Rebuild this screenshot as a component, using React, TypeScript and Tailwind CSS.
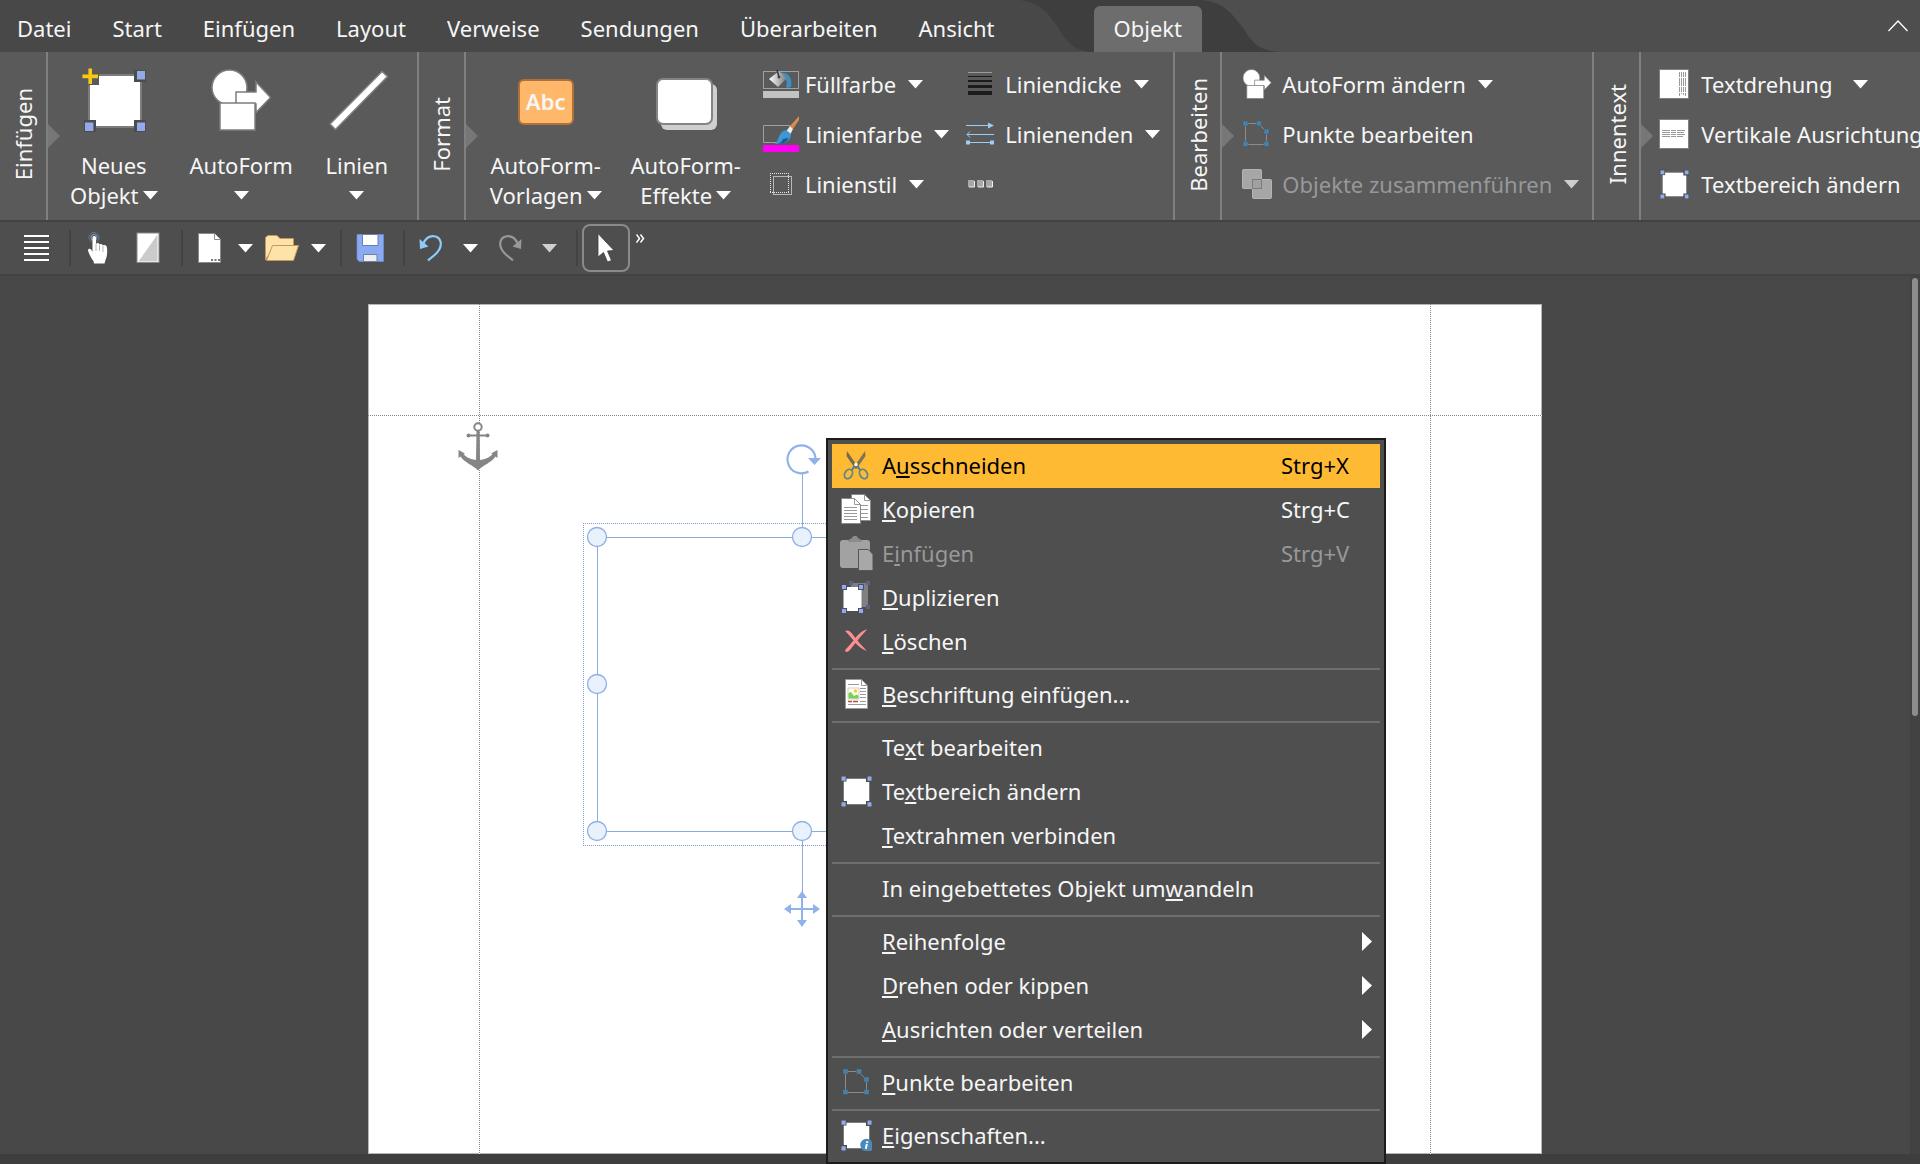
import type { ReactNode } from 'react';

function Caret({ dim = false }: { dim?: boolean }) {
  return (
    <svg width="15" height="9" viewBox="0 0 15 9" className="shrink-0" aria-hidden="true">
      <path d="M0 0H15L7.5 8.500Z" fill={dim ? '#cfcfcf' : '#ffffff'} />
    </svg>
  );
}

function ObjectIcon({ size, plus = false, info = false }: { size: number; plus?: boolean; info?: boolean }) {
  return (
    <svg width={size} height={size} viewBox="0 0 32 32" aria-hidden="true">
      <rect x="3.500" y="3.500" width="26" height="26" fill="#fff" stroke="#7c7c7c" />
      {!plus && <rect x="0.500" y="0.500" width="6" height="6" fill="#4c4c4c" />}
      {!plus && <rect x="1.500" y="1.500" width="4.200" height="4.200" fill="#93aaea" />}
      <path d="M26 1H32V7H26ZM26 26H32V32H26ZM1 26H7V32H1Z" fill="#4c4c4c" />
      <path d="M27.500 1.500H31.500V5.700H27.500ZM27.500 27.300H31.500V31.500H27.500ZM1.500 27.300H5.700V31.500H1.500Z" fill="#93aaea" />
      {plus && <path d="M2 2H8.500V8.500H2Z" fill="#5a5a5a" />}
      {plus && <path d="M3.200 0.300H5V3.300H8V5.100H5V8H3.200V5.100H0.200V3.300H3.200Z" fill="#f9c914" />}
      {info && (
        <g>
          <circle cx="26.500" cy="26" r="6.200" fill="#4a8abb" />
          <path d="M27.400 22.200L27 24M26.900 25L25.800 29.800" stroke="#fff" strokeWidth="2" />
        </g>
      )}
    </svg>
  );
}

function ShapesIcon({ width, height }: { width: number; height: number }) {
  return (
    <svg width={width} height={height} viewBox="0 0 60 62" aria-hidden="true">
      <g fill="#fff" stroke="#7e7e7e" strokeWidth="1.500">
        <circle cx="18.500" cy="18.500" r="17.500" />
        <path d="M25 23H45V13L59.500 28.500L45 43.500V35H25Z" />
        <rect x="9" y="34" width="35" height="27" />
      </g>
    </svg>
  );
}

function LineIcon() {
  return (
    <svg width="64" height="62" viewBox="-4 0 64 62" aria-hidden="true">
      <path d="M1 55L53 2.500L58.500 7.500L6.500 60.500Z" fill="#fff" stroke="#7e7e7e" strokeWidth="1.500" />
    </svg>
  );
}

function EffectsIcon() {
  return (
    <svg width="65" height="64" viewBox="-3 -10 65 64" aria-hidden="true">
      <rect x="5" y="6" width="56" height="46" rx="6" fill="#cfcfcf" />
      <rect x="1" y="1" width="55" height="45" rx="6" fill="#fff" stroke="#848484" strokeWidth="2" />
    </svg>
  );
}

function FillIcon() {
  return (
    <svg width="36" height="30" viewBox="0 0 36 30" aria-hidden="true">
      <defs>
        <linearGradient id="bucket" x1="0" y1="0" x2="1" y2="0">
          <stop offset="0" stopColor="#fff" />
          <stop offset="1" stopColor="#777" />
        </linearGradient>
      </defs>
      <rect x="0.500" y="2.500" width="35" height="17" fill="none" stroke="#a0a0a0" />
      <rect y="22" width="36" height="7" fill="#c2c2c2" />
      <path d="M17 4C25 2 30 9 28 18C26 19 24 19 23 18C25 12 23 8 17 7Z" fill="#3d8fc2" />
      <path d="M16 2L24 9L15 18L6 10Z" fill="url(#bucket)" />
      <path d="M14 1L16 8" stroke="#333" strokeWidth="1.500" />
      <circle cx="16" cy="8" r="1.500" fill="#444" />
    </svg>
  );
}

function BrushIcon() {
  return (
    <svg width="36" height="36" viewBox="0 0 36 36" aria-hidden="true">
      <path d="M27 9.500H0.500V26.500H14" fill="none" stroke="#a0a0a0" />
      <rect y="29" width="36" height="7" fill="#ff00f6" />
      <path d="M36 0V4L30 13L27 10Z" fill="#d98a4e" />
      <path d="M27 10L30 13L27.500 18L23.500 15Z" fill="#eee" />
      <path d="M23 14L28 18C28 25 22 28 12 28C16 25 15 16 23 14Z" fill="#3f97d2" />
      <path d="M20 23C19 26 16 28 12 28L19 27.500C23 26.500 25 24 25.500 22Z" fill="#15599a" />
    </svg>
  );
}

function LineStyleIcon() {
  return (
    <svg width="24" height="24" viewBox="0 0 24 24" shapeRendering="crispEdges" aria-hidden="true">
      <path d="M1 1.500H20M1 20.500H20M1.500 1V21M19.500 1V21" stroke="#e4e4e4" strokeDasharray="1 1" />
      <rect x="4.500" y="4.500" width="18" height="18" fill="none" stroke="#b8b8b8" />
    </svg>
  );
}

function LineWidthIcon() {
  return (
    <svg width="24" height="24" viewBox="0 0 24 24" aria-hidden="true">
      <path d="M0 0H24V1H0Z" fill="#9a9a9a" />
      <path d="M0 4H24V5H0ZM0 8H24V10H0ZM0 13H24V16H0ZM0 19H24V23H0Z" fill="#1c1c1c" />
    </svg>
  );
}

function LineEndsIcon() {
  return (
    <svg width="28" height="24" viewBox="0 0 28 24" aria-hidden="true">
      <g stroke="#9ccdf5" fill="none">
        <path d="M0 3.500H24M1 12.500H28" />
        <path d="M4 9.500L1 12.500L4 15.500" />
        <path d="M2 20.500H26" />
      </g>
      <path d="M22 0.500L28 3.500L22 6.500ZM0 18.500H4V22.500H0ZM24 18.500H28V22.500H24Z" fill="#9ccdf5" />
    </svg>
  );
}

function MoreIcon() {
  return (
    <svg width="26" height="8" viewBox="0 0 26 8" aria-hidden="true">
      <path d="M0 0H6V7H0ZM9 0H15V7H9ZM18 0H24V7H18Z" fill="#a8a8a8" />
      <path d="M1 7H6.500V1M10 7H15.500V1M19 7H24.500V1" stroke="#efefef" fill="none" />
    </svg>
  );
}

function PointsIcon() {
  return (
    <svg width="28" height="28" viewBox="0 0 28 28" aria-hidden="true">
      <path d="M3.500 3.500H16L24.500 11.500V24.500H3.500Z" fill="none" stroke="#8c8c8c" />
      <path d="M1 1H6V6H1ZM14.500 1H19.500V6H14.500ZM22 9H27V14H22ZM1 21.500H6V26.500H1ZM22 21.500H27V26.500H22Z" fill="#4a80a6" stroke="#41586a" strokeWidth="0.500" />
    </svg>
  );
}

function MergeIcon() {
  return (
    <svg width="30" height="30" viewBox="0 0 30 30" aria-hidden="true">
      <rect x="0.500" y="0.500" width="19" height="19" rx="1" fill="#a6a6a6" stroke="#b4b4b4" />
      <rect x="10.500" y="10.500" width="19" height="19" rx="1" fill="#a6a6a6" stroke="#b4b4b4" />
      <rect x="10.500" y="10.500" width="9" height="9" fill="#a0a0a0" stroke="#7c7c7c" />
    </svg>
  );
}

function TextRotateIcon() {
  return (
    <svg width="30" height="30" viewBox="0 0 30 30" aria-hidden="true">
      <rect x="0.500" y="0.500" width="29" height="29" fill="#fff" stroke="#808080" />
      <path d="M20.500 3V27M22.500 3V25M24.500 3V26M26.500 3V27" stroke="#9a9a9a" strokeDasharray="5 1 8 1" />
    </svg>
  );
}

function TextAlignIcon() {
  return (
    <svg width="30" height="30" viewBox="0 0 30 30" aria-hidden="true">
      <rect x="0.500" y="0.500" width="29" height="29" fill="#fff" stroke="#808080" />
      <path d="M3 11.500H27M3 13.500H25M3 15.500H26M3 17.500H24" stroke="#9a9a9a" strokeDasharray="8 1 5 1" />
    </svg>
  );
}

function HandIcon() {
  return (
    <svg width="32" height="32" viewBox="0 0 32 32" aria-hidden="true">
      <circle cx="12" cy="5.500" r="5" fill="none" stroke="#66779e" strokeWidth="1" />
      <circle cx="12" cy="5.500" r="3" fill="none" stroke="#8fa5d5" strokeWidth="1" />
      <path d="M10.500 5.500C10.500 3.500 14 3.500 14 5.500V12C15 10.500 17 11 17.500 12.500C18.500 11.500 20.500 12 21 13.500C22.500 12.500 25 13.500 25 16C25.500 21 25 25 23.500 28L22.500 31.500H12L11.500 29C9 26 7 22 6 18.500C6 16.500 8 16 9.500 18L10.500 20Z" fill="#fff" />
      <path d="M14 12V19M17.500 13V19M21 14V20" stroke="#9a9a9a" strokeWidth="0.700" />
    </svg>
  );
}

function ContrastPageIcon() {
  return (
    <svg width="32" height="32" viewBox="0 0 32 32" aria-hidden="true">
      <rect x="5" y="1" width="22" height="30" fill="#fff" />
      <path d="M25.500 2.500V29.500H6.500Z" fill="#cbcbcb" />
      <rect x="5" y="1" width="22" height="29.500" fill="none" stroke="#8a8a8a" />
    </svg>
  );
}

function NewIcon() {
  return (
    <svg width="32" height="32" viewBox="0 0 32 32" aria-hidden="true">
      <path d="M4.500 1.500H20.500L26.500 7.500V30.500H4.500Z" fill="#fff" stroke="#8a8a8a" />
      <path d="M20.500 1.500V7.500H26.500" fill="#fff" stroke="#8a8a8a" />
      <path d="M17 27H19V29H17ZM20.500 27H22.500V29H20.500ZM24 27H26V29H24Z" fill="#777" />
    </svg>
  );
}

function FolderIcon() {
  return (
    <svg width="34" height="32" viewBox="0 0 34 32" aria-hidden="true">
      <g fill="#fde2a9" stroke="#c8955d" strokeLinejoin="round">
        <path d="M0.500 28V5.500L3 3.500H12L15 6.500H28.500V16H8Z" />
        <path d="M1.500 28.500L7.500 13.500H33.500L28.500 28.500Z" />
      </g>
    </svg>
  );
}

function SaveIcon() {
  return (
    <svg width="32" height="32" viewBox="0 0 32 32" aria-hidden="true">
      <path d="M3 2.500H29.500V29.500H5L3 27Z" fill="#8aabf3" stroke="#6f8fd6" strokeWidth="0.700" />
      <path d="M8.500 2.500H24V13.500H8.500Z" fill="#fff" stroke="#6b80a8" />
      <path d="M9.500 22.500H23V29.500H9.500Z" fill="#eee" stroke="#6b80a8" />
    </svg>
  );
}

function UndoIcon({ color, flip = false }: { color: string; flip?: boolean }) {
  return (
    <svg width="32" height="32" viewBox="0 0 32 32" aria-hidden="true">
      <g transform={flip ? 'matrix(-1 0 0 1 32 0)' : undefined}>
        <path d="M8 12C11 5.500 16 3.500 20.500 4.500C26 6 27 12 24.500 17C22 22 17 25 13 28.500" fill="none" stroke={color} strokeWidth="2.200" />
        <path d="M4.500 7L5 17L13.500 14.500Z" fill={color} />
      </g>
    </svg>
  );
}

function PointerIcon() {
  return (
    <svg width="32" height="32" viewBox="0 0 32 32" aria-hidden="true">
      <path d="M8 1.500L24 18.500L17.500 19L21.500 28.500L17.500 30L13.500 20.500L8 25Z" fill="#fff" stroke="#3d3d3d" strokeWidth="0.800" />
    </svg>
  );
}

function ScissorsIcon() {
  return (
    <svg width="32" height="32" viewBox="0 0 32 32" aria-hidden="true">
      <path d="M7 2L18 18L15.500 20L6.500 7Z" fill="#756c4f" />
      <path d="M25 2L14 18L16.500 20L25.500 7Z" fill="#7d7355" />
      <path d="M15 16L12 21M17 16L20 21" stroke="#5a7e8a" strokeWidth="2" />
      <g fill="none" stroke="#5b8790" strokeWidth="1.800">
        <ellipse cx="8.500" cy="25" rx="3.600" ry="5" transform="rotate(32 8.500 25)" />
        <ellipse cx="23.500" cy="25" rx="3.600" ry="5" transform="rotate(-32 23.500 25)" />
      </g>
      <circle cx="16" cy="15.500" r="1.700" fill="#fff" />
    </svg>
  );
}

function CopyIcon() {
  return (
    <svg width="32" height="32" viewBox="0 0 32 32" aria-hidden="true">
      <path d="M11.500 1.500H24.500L30.500 7.500V27.500H11.500Z" fill="#fff" stroke="#8a8a8a" />
      <path d="M24.500 1.500V7.500H30.500M20 12.500H28M20 16.500H28M20 20.500H28M20 24.500H28" fill="none" stroke="#9a9a9a" />
      <path d="M1.500 5.500H14.500L20.500 11.500V30.500H1.500Z" fill="#fff" stroke="#8a8a8a" />
      <path d="M14.500 5.500V11.500H20.500M4 14.500H17M4 17.500H17M4 20.500H17M4 23.500H17M4 26.500H17" fill="none" stroke="#9a9a9a" />
    </svg>
  );
}

function PasteIcon() {
  return (
    <svg width="34" height="36" viewBox="0 0 34 36" aria-hidden="true">
      <rect x="1" y="5" width="30" height="28" rx="3" fill="#a2a2a2" />
      <path d="M9 7C9 4 12 4 13 3C14 0 18 0 19 3C20 4 23 4 23 7Z" fill="#8b8b8b" />
      <path d="M19.500 14.500H29.500L34 19.500V35.500H19.500Z" fill="#a8a8a8" stroke="#555" />
    </svg>
  );
}

function DuplicateIcon() {
  return (
    <svg width="32" height="34" viewBox="0 0 32 34" aria-hidden="true">
      <rect x="11" y="3" width="17" height="24" fill="#808080" />
      <path d="M9 1H13V5H9ZM26 1H30V5H26ZM26 25H30V29H26Z" fill="#5b6380" />
      <rect x="3.500" y="7" width="18" height="24" fill="#fff" />
      <path d="M1 4H7V10H1ZM18 4H24V10H18ZM1 28H7V34H1ZM18 28H24V34H18Z" fill="#4a4f63" />
      <path d="M2 5H6V9H2ZM19 5H23V9H19ZM2 29H6V33H2ZM19 29H23V33H19Z" fill="#93aaea" />
    </svg>
  );
}

function DeleteIcon() {
  return (
    <svg width="32" height="32" viewBox="0 0 32 32" aria-hidden="true">
      <path d="M5 6C9 4 11 7 15.500 13C19 8.500 23 5 27 4.500C24 8 20 12 17.500 15.500C20 19 24 22.500 27 26C22 24.500 18 21 15.500 18C12 22 10 26 7 27C5.500 27 4.500 26 5.500 24.500C8 22 11 18.500 13.500 15.500C10 11 8 9 5 6Z" fill="#ff8f8f" />
    </svg>
  );
}

function CaptionIcon() {
  return (
    <svg width="32" height="32" viewBox="0 0 32 32" aria-hidden="true">
      <path d="M5.500 1.500H21.500L27.500 7.500V30.500H5.500Z" fill="#fff" stroke="#9a9a9a" />
      <path d="M21.500 1.500V7.500H27.500" fill="none" stroke="#9a9a9a" />
      <path d="M8 6.500H19M20 10.500H26M20 13.500H26M20 16.500H26M20 19.500H26M8 26.500H26M20 23.500H26" stroke="#9a9a9a" />
      <rect x="8" y="10" width="11" height="11" fill="#fffde8" stroke="#bbb" strokeWidth="0.700" />
      <circle cx="15.500" cy="13" r="1.700" fill="#f5cb33" />
      <path d="M8.500 20.500V15L11 14L14 18L17 16.500L18.500 18V20.500Z" fill="#76d159" />
      <path d="M8 23.500H12M13 23.500H18" stroke="#b44a44" strokeWidth="1.500" />
    </svg>
  );
}

const tabs = ['Datei', 'Start', 'Einfügen', 'Layout', 'Verweise', 'Sendungen', 'Überarbeiten', 'Ansicht'];

function TabBar() {
  return (
    <nav className="flex h-[52px] items-end overflow-hidden bg-[#4e4e4e]">
      <div className="flex h-full items-end bg-[#484848]">
        {tabs.map((t) => (
          <button key={t} type="button" className="h-[46px] pb-0.5 pl-[17px] pr-6">
            {t}
          </button>
        ))}
      </div>
      <svg width="75" height="52" viewBox="0 0 75 52" className="shrink-0 bg-[#3e3e3e]" aria-hidden="true">
        <path d="M0 0C22 2 30 14 40 29C50 46 58 51 75 52H0Z" fill="#484848" />
      </svg>
      <div className="flex h-full items-end bg-[#3e3e3e]">
        <button type="button" className="h-[46px] rounded-t-md bg-[#6d6d6d] px-5 pb-0.5">
          Objekt
        </button>
      </div>
      <svg width="78" height="52" viewBox="0 0 78 52" className="shrink-0 bg-[#4e4e4e]" aria-hidden="true">
        <path d="M0 0C22 2 30 14 42 29C52 46 60 51 78 52H0Z" fill="#3e3e3e" />
      </svg>
      <button type="button" aria-label="Menüband minimieren" className="ml-auto mr-3 flex h-full items-center">
        <svg width="20" height="12" viewBox="0 0 20 12" aria-hidden="true">
          <path d="M0.500 11L10 1L19.500 11" fill="none" stroke="#fff" strokeWidth="1.300" />
        </svg>
      </button>
    </nav>
  );
}

function GroupLabel({ children, first = false }: { children: string; first?: boolean }) {
  return (
    <div
      className={
        first
          ? 'relative flex w-12 shrink-0 items-center justify-center border-r-2 border-[#808080] pb-[3px]'
          : 'relative flex w-[49px] shrink-0 items-center justify-center border-x-2 border-[#808080] pb-[3px]'
      }
    >
      <span className="rotate-180 leading-[30px] [writing-mode:vertical-rl]">{children}</span>
      <svg width="12" height="24" viewBox="0 0 12 24" className="absolute -right-3.5 top-[72px]" aria-hidden="true">
        <path d="M0 0L12 12L0 24Z" fill="#777" />
      </svg>
    </div>
  );
}

function BigButton({ icon, line1, line2 }: { icon: ReactNode; line1: string; line2?: string }) {
  return (
    <button type="button" className="flex shrink-0 flex-col items-center pt-4">
      <span className="mb-[18px] flex h-16 items-center justify-center">{icon}</span>
      <span>{line1}</span>
      <span className="flex h-[30px] items-center gap-1">
        {line2}
        <Caret />
      </span>
    </button>
  );
}

type RowProps = {
  icon: ReactNode;
  label: string;
  iconBox: string;
  caret?: boolean;
  wide?: boolean;
  disabled?: boolean;
};

function RowButton({ icon, label, iconBox, caret = false, wide = false, disabled = false }: RowProps) {
  return (
    <button type="button" disabled={disabled} className="flex h-[50px] items-center disabled:text-[#989898]">
      <span className={`flex shrink-0 items-center ${iconBox}`}>{icon}</span>
      <span className={wide ? 'mr-5' : 'mr-3'}>{label}</span>
      {caret && <Caret dim={disabled} />}
    </button>
  );
}

function Ribbon() {
  return (
    <div className="flex h-[170px] overflow-hidden border-b-2 border-[#424242] bg-[#5a5a5a] whitespace-nowrap">
      <GroupLabel first>Einfügen</GroupLabel>
      <div className="flex shrink-0 items-start gap-8 pl-[22px] pr-7">
        <BigButton icon={<ObjectIcon size={64} plus />} line1="Neues" line2="Objekt" />
        <BigButton icon={<ShapesIcon width={60} height={62} />} line1="AutoForm" />
        <BigButton icon={<LineIcon />} line1="Linien" />
      </div>
      <GroupLabel>Format</GroupLabel>
      <div className="flex shrink-0 items-start pl-6 pr-[13px]">
        <div className="flex gap-[29px] pr-[22px]">
          <BigButton
            icon={
              <span className="mt-1 flex h-[46px] w-14 items-center justify-center rounded-md border-2 border-[#b0703a] bg-[#ffb869] pb-0.5 font-semibold">
                Abc
              </span>
            }
            line1="AutoForm-"
            line2="Vorlagen"
          />
          <BigButton icon={<EffectsIcon />} line1="AutoForm-" line2="Effekte" />
        </div>
        <div className="flex flex-col items-start pr-[17px] pt-[7px]">
          <RowButton iconBox="w-[42px]" icon={<FillIcon />} label="Füllfarbe" caret />
          <RowButton iconBox="w-[42px]" icon={<BrushIcon />} label="Linienfarbe" caret />
          <RowButton iconBox="w-[42px] pl-1.5" icon={<LineStyleIcon />} label="Linienstil" caret />
        </div>
        <div className="flex flex-col items-start pt-[7px]">
          <RowButton iconBox="w-[39px] pl-0.5" icon={<LineWidthIcon />} label="Liniendicke" caret />
          <RowButton iconBox="w-[39px]" icon={<LineEndsIcon />} label="Linienenden" caret />
          <button type="button" aria-label="Weitere Optionen" className="flex h-[50px] items-center pl-0.5">
            <MoreIcon />
          </button>
        </div>
      </div>
      <GroupLabel>Bearbeiten</GroupLabel>
      <div className="flex shrink-0 flex-col items-start pl-5 pr-[13px] pt-[7px]">
        <RowButton iconBox="w-10" icon={<ShapesIcon width={30} height={30} />} label="AutoForm ändern" caret />
        <RowButton iconBox="w-10" icon={<PointsIcon />} label="Punkte bearbeiten" />
        <RowButton iconBox="w-10" icon={<MergeIcon />} label="Objekte zusammenführen" caret disabled />
      </div>
      <GroupLabel>Innentext</GroupLabel>
      <div className="flex shrink-0 flex-col items-start pl-[18px] pt-[7px]">
        <RowButton iconBox="w-[42px]" icon={<TextRotateIcon />} label="Textdrehung" caret wide />
        <RowButton iconBox="w-[42px]" icon={<TextAlignIcon />} label="Vertikale Ausrichtung" caret />
        <RowButton iconBox="w-[42px]" icon={<ObjectIcon size={30} />} label="Textbereich ändern" />
      </div>
    </div>
  );
}

function ToolButton({ label, children }: { label: string; children: ReactNode }) {
  return (
    <button type="button" aria-label={label} className="flex shrink-0 items-center justify-center">
      {children}
    </button>
  );
}

function Divider() {
  return <div className="h-9 w-0.5 shrink-0 bg-[#434343]" />;
}

function Toolbar() {
  return (
    <div className="flex h-[54px] items-center border-b-2 border-[#424242] bg-[#4e4e4e]">
      <div className="flex w-[69px] items-center pl-6">
        <ToolButton label="Menü">
          <svg width="25" height="28" viewBox="0 0 25 28" aria-hidden="true">
            <path d="M0 2H25M0 8H25M0 14H25M0 20H25M0 26H25" stroke="#fff" strokeWidth="2" />
          </svg>
        </ToolButton>
      </div>
      <Divider />
      <div className="flex gap-[18px] pl-[11px] pr-[17px]">
        <ToolButton label="Touch-Modus"><HandIcon /></ToolButton>
        <ToolButton label="Kontrast"><ContrastPageIcon /></ToolButton>
      </div>
      <Divider />
      <div className="flex gap-3 pl-[11px] pr-3.5">
        <ToolButton label="Neu"><NewIcon /></ToolButton>
        <ToolButton label="Neu, Optionen"><Caret /></ToolButton>
        <ToolButton label="Öffnen"><FolderIcon /></ToolButton>
        <ToolButton label="Zuletzt geöffnet"><Caret /></ToolButton>
      </div>
      <Divider />
      <div className="flex pl-3 pr-[17px]">
        <ToolButton label="Speichern"><SaveIcon /></ToolButton>
      </div>
      <Divider />
      <div className="flex gap-4 pl-2.5 pr-[19px]">
        <ToolButton label="Rückgängig"><UndoIcon color="#8fcbf7" /></ToolButton>
        <ToolButton label="Rückgängig, Liste"><Caret /></ToolButton>
        <ToolButton label="Wiederholen"><UndoIcon color="#989898" flip /></ToolButton>
        <ToolButton label="Wiederholen, Liste"><Caret dim /></ToolButton>
      </div>
      <Divider />
      <button
        type="button"
        aria-label="Objekte auswählen"
        className="ml-1 flex h-12 w-12 shrink-0 items-center justify-center rounded-lg border-2 border-[#8a8a8a]"
      >
        <PointerIcon />
      </button>
      <button type="button" aria-label="Weitere Symbole" className="ml-1.5 flex h-full items-start pt-3">
        <svg width="9" height="9" viewBox="0 0 9 9" aria-hidden="true">
          <path d="M0.500 0.500L3.500 4.500L0.500 8.500M4.500 0.500L7.500 4.500L4.500 8.500" fill="none" stroke="#fff" strokeWidth="1.500" />
        </svg>
      </button>
    </div>
  );
}

const handles = [
  [229, 233],
  [434, 233],
  [639, 233],
  [229, 380],
  [639, 380],
  [229, 527],
  [434, 527],
  [639, 527],
];

function SelectionDrawing() {
  return (
    <svg className="absolute left-0 top-0" width="700" height="640" viewBox="0 0 700 640" aria-hidden="true">
      <path
        d="M215 219.500H653M215 541.500H653M215.500 219V542M653.500 219V542"
        stroke="#7d9bd0"
        strokeDasharray="1 1"
        shapeRendering="crispEdges"
      />
      <g fill="none" stroke="#8badde">
        <rect x="229.500" y="233.500" width="410" height="294" />
        <path d="M434.500 168V224M434.500 537V588" />
        <path d="M447.500 155A14 14 0 1 0 440.500 167.500" stroke="#8fb2ea" strokeWidth="2.200" />
        <path d="M418 605H450M434 589V621" stroke="#8fb2ea" strokeWidth="2" />
      </g>
      <g fill="#e8f1fc" stroke="#8fafe6" strokeWidth="1.300">
        {handles.map(([x, y]) => (
          <circle key={`${x}-${y}`} cx={x} cy={y} r="9.500" />
        ))}
      </g>
      <path
        d="M440 154H453L446.500 161ZM434 587L439 594H429ZM434 623L439 616H429ZM416 605L423 600V610ZM452 605L445 600V610Z"
        fill="#8fb2ea"
      />
    </svg>
  );
}

function AnchorIcon() {
  return (
    <svg className="absolute left-[90px] top-[117px]" width="40" height="50" viewBox="0 0 40 50" aria-hidden="true">
      <circle cx="20" cy="6" r="3.700" fill="#fff" stroke="#858585" strokeWidth="2" />
      <path d="M10 14.500H30" stroke="#858585" strokeWidth="2" />
      <circle cx="10.500" cy="14.500" r="2" fill="#858585" />
      <circle cx="29.500" cy="14.500" r="2" fill="#858585" />
      <path
        d="M18.500 10H21.500L22 39C29 38 33 35 34.500 33L33 32.500L39.500 29V37L37.500 35.500C33 42 25 44 20 49.500C15 44 7 42 2.500 35.500L0.500 37V29L7 32.500L5.500 33C7 35 11 38 18 39Z"
        fill="#858585"
      />
    </svg>
  );
}

type Item = {
  label: string;
  key: number;
  icon?: ReactNode;
  shortcut?: string;
  disabled?: boolean;
  active?: boolean;
  submenu?: boolean;
};

const sections: Item[][] = [
  [
    { label: 'Ausschneiden', key: 1, icon: <ScissorsIcon />, shortcut: 'Strg+X', active: true },
    { label: 'Kopieren', key: 0, icon: <CopyIcon />, shortcut: 'Strg+C' },
    { label: 'Einfügen', key: 1, icon: <PasteIcon />, shortcut: 'Strg+V', disabled: true },
    { label: 'Duplizieren', key: 0, icon: <DuplicateIcon /> },
    { label: 'Löschen', key: 0, icon: <DeleteIcon /> },
  ],
  [{ label: 'Beschriftung einfügen...', key: 0, icon: <CaptionIcon /> }],
  [
    { label: 'Text bearbeiten', key: 2 },
    { label: 'Textbereich ändern', key: 2, icon: <ObjectIcon size={32} /> },
    { label: 'Textrahmen verbinden', key: 0 },
  ],
  [{ label: 'In eingebettetes Objekt umwandeln', key: 26 }],
  [
    { label: 'Reihenfolge', key: 0, submenu: true },
    { label: 'Drehen oder kippen', key: 0, submenu: true },
    { label: 'Ausrichten oder verteilen', key: 0, submenu: true },
  ],
  [{ label: 'Punkte bearbeiten', key: 0, icon: <PointsIcon /> }],
  [{ label: 'Eigenschaften...', key: 0, icon: <ObjectIcon size={32} info /> }],
];

function MenuItem({ item }: { item: Item }) {
  return (
    <button
      type="button"
      role="menuitem"
      disabled={item.disabled}
      className={
        item.active
          ? 'flex h-11 w-full items-center bg-[#ffba33] pb-0.5 text-black'
          : 'flex h-11 w-full items-center pb-0.5 disabled:text-[#989898]'
      }
    >
      <span className="flex w-12 shrink-0 items-center justify-center">{item.icon}</span>
      <span className="ml-0.5 whitespace-pre">
        {item.label.slice(0, item.key)}
        <span className="underline decoration-2 underline-offset-2 [text-decoration-skip-ink:none]">
          {item.label[item.key]}
        </span>
        {item.label.slice(item.key + 1)}
      </span>
      {item.shortcut && <span className="ml-auto mr-[29px] w-[70px] text-left">{item.shortcut}</span>}
      {item.submenu && (
        <svg width="10" height="19" viewBox="0 0 10 19" className="ml-auto mr-2" aria-hidden="true">
          <path d="M0 0L10 9.500L0 19Z" fill="#fff" />
        </svg>
      )}
    </button>
  );
}

function ContextMenu() {
  return (
    <div
      role="menu"
      className="absolute left-[458px] top-[134px] z-10 w-[560px] border-2 border-[#1c1c1c] bg-[#4f4f4f] p-1"
    >
      {sections.map((section, i) => (
        <div key={section[0].label}>
          {i > 0 && <div className="mb-[3px] mt-1 h-0.5 bg-[#6e6e6e]" />}
          {section.map((item) => (
            <MenuItem key={item.label} item={item} />
          ))}
        </div>
      ))}
    </div>
  );
}

export default function App() {
  return (
    <div className="flex min-h-screen flex-col bg-[#3e3e3e] font-['Noto_Sans',sans-serif] text-[22px] leading-[30px] text-[#f6f6f6]">
      <TabBar />
      <Ribbon />
      <Toolbar />
      <main className="flex flex-1">
        <div className="flex flex-1 justify-center bg-[#484848] pt-7">
          <div className="relative w-[1174px] shrink-0 bg-white outline outline-1 -outline-offset-1 outline-[#b5b5b5]">
            <div className="absolute inset-y-0 left-[111px] w-px bg-[repeating-linear-gradient(to_bottom,#848484_0_1px,#ffffff_1px_2px)]" />
            <div className="absolute inset-y-0 right-[111px] w-px bg-[repeating-linear-gradient(to_bottom,#848484_0_1px,#ffffff_1px_2px)]" />
            <div className="absolute inset-x-0 top-[111px] h-px bg-[repeating-linear-gradient(to_right,#848484_0_1px,#ffffff_1px_2px)]" />
            <AnchorIcon />
            <SelectionDrawing />
            <ContextMenu />
          </div>
        </div>
        <div className="flex w-[10px] justify-center bg-[#424242] pt-0.5">
          <div className="h-[438px] w-1.5 rounded-full bg-[#8c8c8c]" />
        </div>
      </main>
      <footer className="h-[10px] bg-[#3e3e3e]" />
    </div>
  );
}
